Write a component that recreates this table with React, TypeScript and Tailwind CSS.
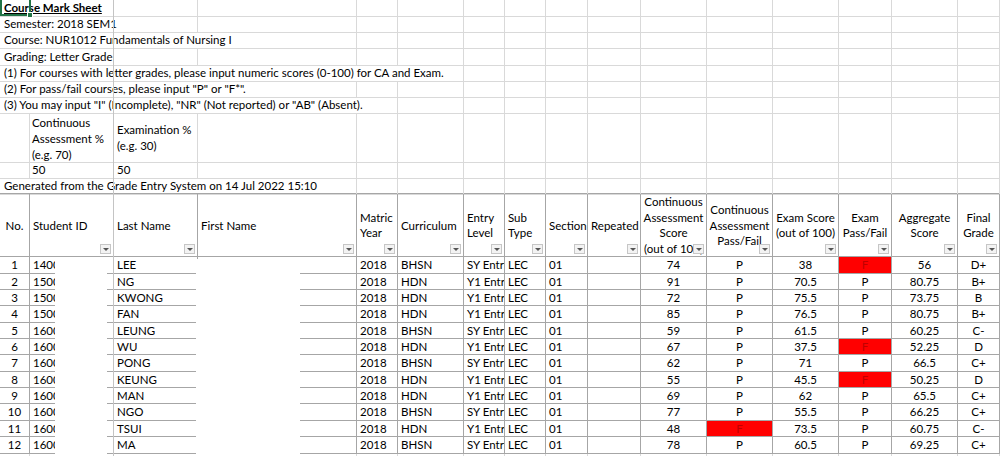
import clsx from "clsx";

const COLS =
  "grid grid-cols-[30px_84px_84px_159px_41px_66px_41px_41px_42px_53px_66px_66px_66px_53px_66px_42px]";

const GRID = "border-r border-b border-[#d9d9d9]";
const LINE = "border-r border-b border-[#a6a6a6]";

type Row = [number, string, string, string, string, string, number, string, number, string, number, string];

// no, id, last, curriculum, entry, caScore, caPF, exam, examPF, aggregate, grade (+matric in col)
const students: Row[] = [
  [1, "14000000", "LEE", "2018", "BHSN", "SY Entry", 74, "P", 38, "F", 56, "D+"],
  [2, "15000000", "NG", "2018", "HDN", "Y1 Entry", 91, "P", 70.5, "P", 80.75, "B+"],
  [3, "15000000", "KWONG", "2018", "HDN", "Y1 Entry", 72, "P", 75.5, "P", 73.75, "B"],
  [4, "15000000", "FAN", "2018", "HDN", "Y1 Entry", 85, "P", 76.5, "P", 80.75, "B+"],
  [5, "16000000", "LEUNG", "2018", "BHSN", "SY Entry", 59, "P", 61.5, "P", 60.25, "C-"],
  [6, "16000000", "WU", "2018", "HDN", "Y1 Entry", 67, "P", 37.5, "F", 52.25, "D"],
  [7, "16000000", "PONG", "2018", "BHSN", "SY Entry", 62, "P", 71, "P", 66.5, "C+"],
  [8, "16000000", "KEUNG", "2018", "HDN", "Y1 Entry", 55, "P", 45.5, "F", 50.25, "D"],
  [9, "16000000", "MAN", "2018", "HDN", "Y1 Entry", 69, "P", 62, "P", 65.5, "C+"],
  [10, "16000000", "NGO", "2018", "BHSN", "SY Entry", 77, "P", 55.5, "P", 66.25, "C+"],
  [11, "16000000", "TSUI", "2018", "HDN", "Y1 Entry", 48, "F", 73.5, "P", 60.75, "C-"],
  [12, "16000000", "MA", "2018", "BHSN", "SY Entry", 78, "P", 60.5, "P", 69.25, "C+"],
];

function Blank({ n }: { n: number }) {
  return (
    <>
      {Array.from({ length: n }).map((_, i) => (
        <div key={i} className={GRID} />
      ))}
    </>
  );
}

// top rows: one overflowing text cell, then empty grid cells
function TextRow({ text, span, rest, bold }: { text: string; span: string; rest: number; bold?: boolean }) {
  return (
    <div className={clsx(COLS, "h-[16.2px]")}>
      <div className={clsx(span, "border-b border-r border-[#d9d9d9] pl-[4px] whitespace-nowrap leading-[16px]", bold && "font-bold underline")}>
        {text}
      </div>
      <Blank n={rest} />
    </div>
  );
}

function FilterBtn() {
  return (
    <span className="absolute right-[2px] bottom-[2px] w-[11px] h-[10px] border border-[#c6c6c6] bg-[#f3f3f3] flex items-center justify-center">
      <span className="w-0 h-0 border-l-[3px] border-r-[3px] border-t-[3px] border-l-transparent border-r-transparent border-t-[#555]" />
    </span>
  );
}

function Head({ children, center, className }: { children?: React.ReactNode; center?: boolean; className?: string }) {
  return (
    <div
      className={clsx(
        LINE,
        "relative flex items-center overflow-hidden leading-[15.7px]",
        center ? "justify-center text-center" : "pl-[3px]",
        className
      )}
    >
      <div>{children}</div>
      <FilterBtn />
    </div>
  );
}

function Cell({ children, center, red }: { children?: React.ReactNode; center?: boolean; red?: boolean }) {
  return (
    <div
      className={clsx(
        LINE,
        "whitespace-nowrap overflow-hidden leading-[16px]",
        center ? "text-center" : "pl-[3px]",
        red && "bg-[#ff0000] text-[#c00000]"
      )}
    >
      {children}
    </div>
  );
}

export default function App() {
  return (
    <div className="relative w-[1000px] h-[456px] overflow-hidden bg-white text-[11.5px] text-black font-['Lato',sans-serif]">
      <TextRow text="Course Mark Sheet" span="col-span-2" rest={14} bold />
      <TextRow text="Semester: 2018 SEM1" span="col-span-2" rest={14} />
      <TextRow text="Course: NUR1012 Fundamentals of Nursing I" span="col-span-4" rest={12} />
      <TextRow text="Grading: Letter Grade" span="col-span-2" rest={14} />
      <TextRow
        text="(1) For courses with letter grades, please input numeric scores (0-100) for CA and Exam."
        span="col-span-6"
        rest={10}
      />
      <TextRow text={'(2) For pass/fail courses, please input "P" or "F*".'} span="col-span-4" rest={12} />
      <TextRow
        text={'(3) You may input "I" (Incomplete), "NR" (Not reported) or "AB" (Absent).'}
        span="col-span-5"
        rest={11}
      />

      {/* weighting */}
      <div className={clsx(COLS, "h-[48.5px]")}>
        <div className={GRID} />
        <div className={clsx(GRID, "pl-[2px] pt-[2px] leading-[15.7px]")}>
          Continuous
          <br />
          Assessment %
          <br />
          (e.g. 70)
        </div>
        <div className={clsx(GRID, "pl-[3px] flex items-center leading-[15.7px]")}>
          <div>
            Examination %
            <br />
            (e.g. 30)
          </div>
        </div>
        <Blank n={13} />
      </div>
      <div className={clsx(COLS, "h-[16.4px] leading-[16px]")}>
        <div className={GRID} />
        <div className={clsx(GRID, "pl-[2px]")}>50</div>
        <div className={clsx(GRID, "pl-[3px]")}>50</div>
        <Blank n={13} />
      </div>
      <TextRow text="Generated from the Grade Entry System on 14 Jul 2022 15:10" span="col-span-4" rest={12} />

      {/* header */}
      <div className={clsx(COLS, "h-[64px] border-t border-[#a6a6a6] -mt-px")}>
        <div className={clsx(LINE, "flex items-center justify-center")}>No.</div>
        <Head>Student ID</Head>
        <Head>Last Name</Head>
        <Head>First Name</Head>
        <Head>
          Matric
          <br />
          Year
        </Head>
        <Head>Curriculum</Head>
        <Head>
          Entry
          <br />
          Level
        </Head>
        <Head>
          Sub
          <br />
          Type
        </Head>
        <Head>Section</Head>
        <Head>Repeated</Head>
        <Head center className="whitespace-nowrap">
          Continuous
          <br />
          Assessment
          <br />
          Score
          <br />
          (out of 100)
        </Head>
        <Head center>
          Continuous
          <br />
          Assessment
          <br />
          Pass/Fail
        </Head>
        <Head center className="whitespace-nowrap">
          Exam Score
          <br />
          (out of 100)
        </Head>
        <Head center>
          Exam
          <br />
          Pass/Fail
        </Head>
        <Head center>
          Aggregate
          <br />
          Score
        </Head>
        <Head center>
          Final
          <br />
          Grade
        </Head>
      </div>

      {/* data */}
      {students.map((s) => (
        <div key={s[0]} className={clsx(COLS, "h-[16.35px]")}>
          <Cell center>{s[0]}</Cell>
          <Cell>{s[1]}</Cell>
          <Cell>{s[2]}</Cell>
          <Cell />
          <Cell>{s[3]}</Cell>
          <Cell>{s[4]}</Cell>
          <Cell>{s[5]}</Cell>
          <Cell>LEC</Cell>
          <Cell>01</Cell>
          <Cell />
          <Cell center>{s[6]}</Cell>
          <Cell center red={s[7] === "F"}>
            {s[7]}
          </Cell>
          <Cell center>{s[8]}</Cell>
          <Cell center red={s[9] === "F"}>
            {s[9]}
          </Cell>
          <Cell center>{s[10]}</Cell>
          <Cell center>{s[11]}</Cell>
        </div>
      ))}
      <div className={clsx(COLS, "h-[16.35px]")}>
        <Blank n={16} />
      </div>

      {/* freeze pane line */}
      <div className="absolute left-[113px] top-0 bottom-0 w-px bg-[#c4c4c4]" />
      {/* redacted areas */}
      <div className="absolute left-[55px] w-[52px] top-[259px] bottom-0 bg-white" />
      <div className="absolute left-[196px] w-[104px] top-[259px] bottom-0 bg-white" />
      {/* active cell */}
      <div className="absolute left-0 top-[-2px] w-[31px] h-[18px] border-2 border-[#217346]" />
      <div className="absolute left-[27px] top-[12px] w-[6px] h-[6px] bg-[#217346] border border-white" />
    </div>
  );
}
